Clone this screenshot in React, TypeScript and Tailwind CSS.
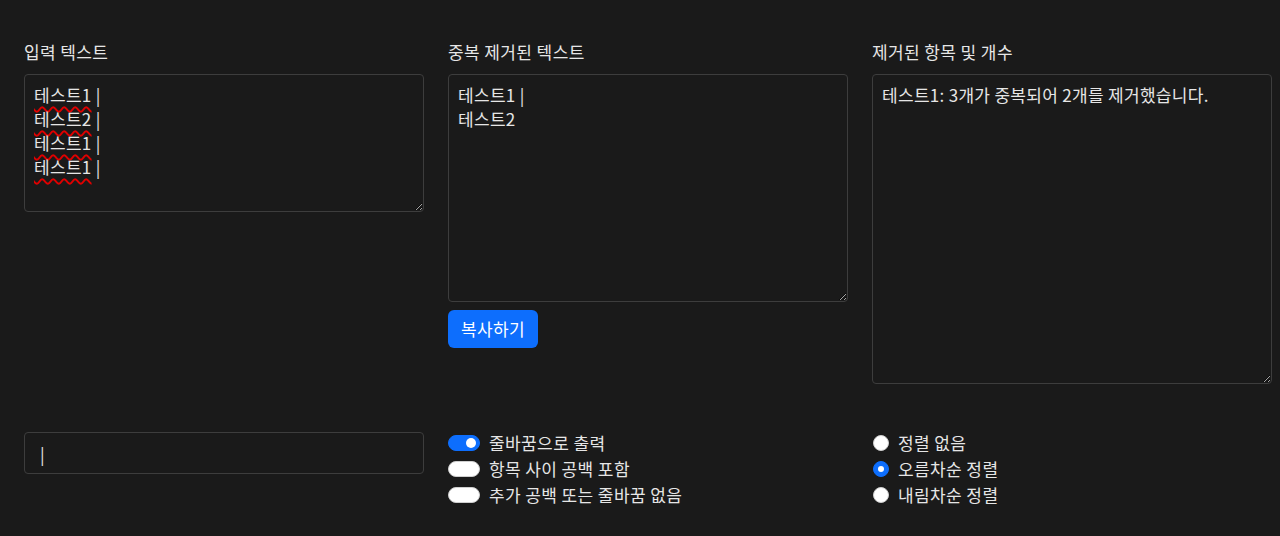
import { useState } from "react";

const FONT = "font-['Noto_Sans_CJK_KR','Noto_Sans',sans-serif]";

const boxClass =
  "w-full rounded border border-[#3d3d3d] bg-[#1a1a1a] px-[9px] py-2 text-[17px] leading-6 tracking-[0.3px] text-[#e6e6e6] outline-none";

function Squiggle({ children }: { children: string }) {
  return (
    <span className="underline decoration-wavy decoration-[#e00000] decoration-[1.5px] underline-offset-[4px] [text-decoration-skip-ink:none]">
      {children}
    </span>
  );
}

function Switch({ on, label }: { on: boolean; label: string }) {
  return (
    <label className="flex h-[26px] items-center gap-[9px]">
      <span
        className={`flex h-4 w-8 shrink-0 items-center rounded-full border px-[3px] ${
          on ? "justify-end border-[#0d6efd] bg-[#0d6efd]" : "justify-start border-[#cfcfcf] bg-white"
        }`}
      >
        <span className="h-[10px] w-[10px] rounded-full bg-white" />
      </span>
      <span>{label}</span>
    </label>
  );
}

function Radio({ on, label }: { on: boolean; label: string }) {
  return (
    <label className="flex h-[26px] items-center gap-[9px] pl-px">
      <span
        className={`flex h-4 w-4 shrink-0 items-center justify-center rounded-full border ${
          on ? "border-[#0d6efd] bg-[#0d6efd]" : "border-[#cfcfcf] bg-white"
        }`}
      >
        {on && <span className="h-[6px] w-[6px] rounded-full bg-white" />}
      </span>
      <span>{label}</span>
    </label>
  );
}

export default function App() {
  const [output] = useState("테스트1 |\n테스트2");
  const [removed] = useState("테스트1: 3개가 중복되어 2개를 제거했습니다.");

  return (
    <main
      className={`min-h-screen bg-[#1a1a1a] pl-6 pr-2 pt-10 text-[17px] tracking-[0.4px] text-[#e6e6e6] ${FONT}`}
    >
      <div className="flex items-start gap-6">
        <section className="flex w-[400px] shrink-0 flex-col">
          <h2 className="mb-[10px] leading-6">입력 텍스트</h2>
          <div className={`${boxClass} h-[138px] resize-y overflow-auto whitespace-pre`}>
            <div>
              <Squiggle>테스트1</Squiggle> |
            </div>
            <div>
              <Squiggle>테스트2</Squiggle> |
            </div>
            <div>
              <Squiggle>테스트1</Squiggle> |
            </div>
            <div>
              <Squiggle>테스트1</Squiggle> |
            </div>
          </div>
        </section>

        <section className="flex w-[400px] shrink-0 flex-col">
          <h2 className="mb-[10px] leading-6">중복 제거된 텍스트</h2>
          <textarea readOnly value={output} className={`${boxClass} h-[228px] resize-y`} />
          <button
            type="button"
            className="mt-2 h-[38px] w-[90px] rounded-md bg-[#0d6efd] text-[17px] text-white"
          >
            복사하기
          </button>
        </section>

        <section className="flex w-[400px] shrink-0 flex-col">
          <h2 className="mb-[10px] leading-6">제거된 항목 및 개수</h2>
          <textarea readOnly value={removed} className={`${boxClass} h-[310px] resize-y`} />
        </section>
      </div>

      <div className="mt-12 flex items-start gap-6">
        <div className="w-[400px] shrink-0">
          <input
            readOnly
            value="|"
            className="h-[42px] w-full rounded border border-[#3d3d3d] bg-[#1a1a1a] px-[15px] text-[17px] text-[#e6e6e6] outline-none"
          />
        </div>
        <div className="-mt-0.5 flex w-[400px] shrink-0 flex-col">
          <Switch on label="줄바꿈으로 출력" />
          <Switch on={false} label="항목 사이 공백 포함" />
          <Switch on={false} label="추가 공백 또는 줄바꿈 없음" />
        </div>
        <div className="-mt-0.5 flex w-[400px] shrink-0 flex-col">
          <Radio on={false} label="정렬 없음" />
          <Radio on label="오름차순 정렬" />
          <Radio on={false} label="내림차순 정렬" />
        </div>
      </div>
    </main>
  );
}
